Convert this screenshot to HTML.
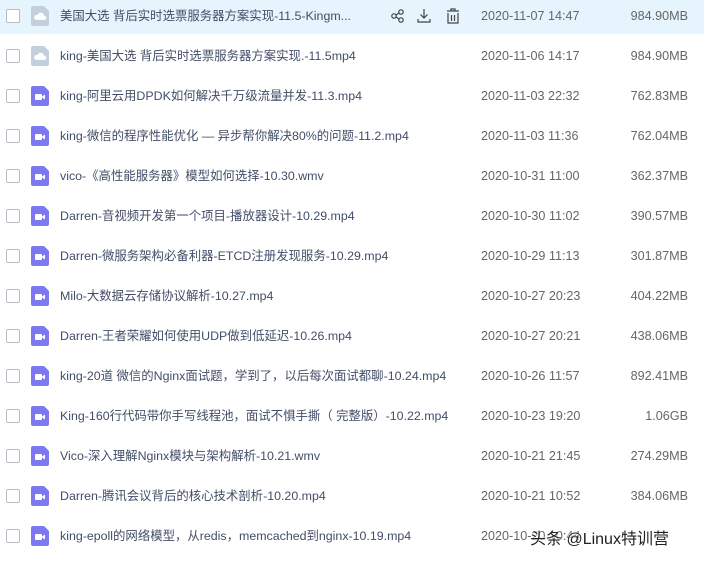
<html><head><style>
body{margin:0;width:704px;height:564px;background:#fff;font-family:"Liberation Sans","Noto Sans CJK SC",sans-serif;font-size:12.4px;color:#424e67;position:relative;overflow:hidden}
.r{position:absolute;left:0;width:704px;height:35px}
.r.h{background:#e5f4fd}
.cb{position:absolute;left:6px;top:10px;width:12px;height:12px;border:1px solid #b9bec6;border-radius:2px;background:#fff}
.ic{position:absolute;left:31px;top:7px;width:18px;height:20px}
.n,.d,.s{position:absolute;top:9px;line-height:16px;height:16px;white-space:nowrap}
.n{left:60px}
.d{left:481px;color:#666;font-size:12.6px}
.s{right:16px;color:#666;font-size:12.6px}
.wm{position:absolute;left:530px;top:530px;font-size:16px;line-height:20px;color:#222;text-shadow:0 0 2px #fff,0 0 2px #fff}
</style></head><body>
<div id="list"></div>
<script>
const rows=[
["c","美国大选 背后实时选票服务器方案实现-11.5-Kingm...","2020-11-07 14:47","984.90MB"],
["c","king-美国大选 背后实时选票服务器方案实现.-11.5mp4","2020-11-06 14:17","984.90MB"],
["v","king-阿里云用DPDK如何解决千万级流量并发-11.3.mp4","2020-11-03 22:32","762.83MB"],
["v","king-微信的程序性能优化 — 异步帮你解决80%的问题-11.2.mp4","2020-11-03 11:36","762.04MB"],
["v","vico-《高性能服务器》模型如何选择-10.30.wmv","2020-10-31 11:00","362.37MB"],
["v","Darren-音视频开发第一个项目-播放器设计-10.29.mp4","2020-10-30 11:02","390.57MB"],
["v","Darren-微服务架构必备利器-ETCD注册发现服务-10.29.mp4","2020-10-29 11:13","301.87MB"],
["v","Milo-大数据云存储协议解析-10.27.mp4","2020-10-27 20:23","404.22MB"],
["v","Darren-王者荣耀如何使用UDP做到低延迟-10.26.mp4","2020-10-27 20:21","438.06MB"],
["v","king-20道 微信的Nginx面试题，学到了，以后每次面试都聊-10.24.mp4","2020-10-26 11:57","892.41MB"],
["v","King-160行代码带你手写线程池，面试不惧手撕（ 完整版）-10.22.mp4","2020-10-23 19:20","1.06GB"],
["v","Vico-深入理解Nginx模块与架构解析-10.21.wmv","2020-10-21 21:45","274.29MB"],
["v","Darren-腾讯会议背后的核心技术剖析-10.20.mp4","2020-10-21 10:52","384.06MB"],
["v","king-epoll的网络模型，从redis，memcached到nginx-10.19.mp4","2020-10-20 10:44",""]];
let h="";
rows.forEach((r,i)=>{
const y=i*40-1;
const icon=r[0]=="c"?
`<svg class="ic" viewBox="0 0 18 20"><path d="M2 0H13L18 5V18a2 2 0 0 1-2 2H2a2 2 0 0 1-2-2V2a2 2 0 0 1 2-2z" fill="#c4cfdc"/><path d="M5 14h8a2.2 2.2 0 0 0 0-4.4A3.3 3.3 0 0 0 6.6 9 2.5 2.5 0 0 0 5 14z" fill="#fff"/></svg>`:
`<svg class="ic" viewBox="0 0 18 20"><path d="M2 0H13L18 5V18a2 2 0 0 1-2 2H2a2 2 0 0 1-2-2V2a2 2 0 0 1 2-2z" fill="#7b78f0"/><rect x="4" y="8" width="7" height="6" rx="1" fill="#fff"/><path d="M11 10.5L14 8.5V13.5L11 11.5z" fill="#fff"/></svg>`;
h+=`<div class="r${i==0?' h':''}" style="top:${y}px"><div class="cb"></div>${icon}<div class="n">${r[1]}</div><div class="d">${r[2]}</div><div class="s">${r[3]}</div>${i==0?`<svg style="position:absolute;left:390px;top:9px" width="16" height="16" viewBox="0 0 16 16" fill="none" stroke="#444" stroke-width="1.2"><circle cx="4" cy="8" r="2.2"/><circle cx="11" cy="4" r="2.2"/><circle cx="11" cy="12" r="2.2"/><path d="M6 7L9 5M6 9L9 11"/></svg><svg style="position:absolute;left:416px;top:9px" width="16" height="16" viewBox="0 0 16 16" fill="none" stroke="#444" stroke-width="1.2"><path d="M8 1V10M4.5 6.5L8 10L11.5 6.5M2 11V14H14V11"/></svg><svg style="position:absolute;left:445px;top:8px" width="16" height="18" viewBox="0 0 16 18" fill="none" stroke="#444" stroke-width="1.2"><path d="M2 4H14M6 4V2H10V4M3 6V16H13V6M6.5 8V14M9.5 8V14"/></svg>`:''}</div>`;});
document.getElementById("list").innerHTML=h;
</script>
<div class="wm">头条 @Linux特训营</div>
</body></html>
